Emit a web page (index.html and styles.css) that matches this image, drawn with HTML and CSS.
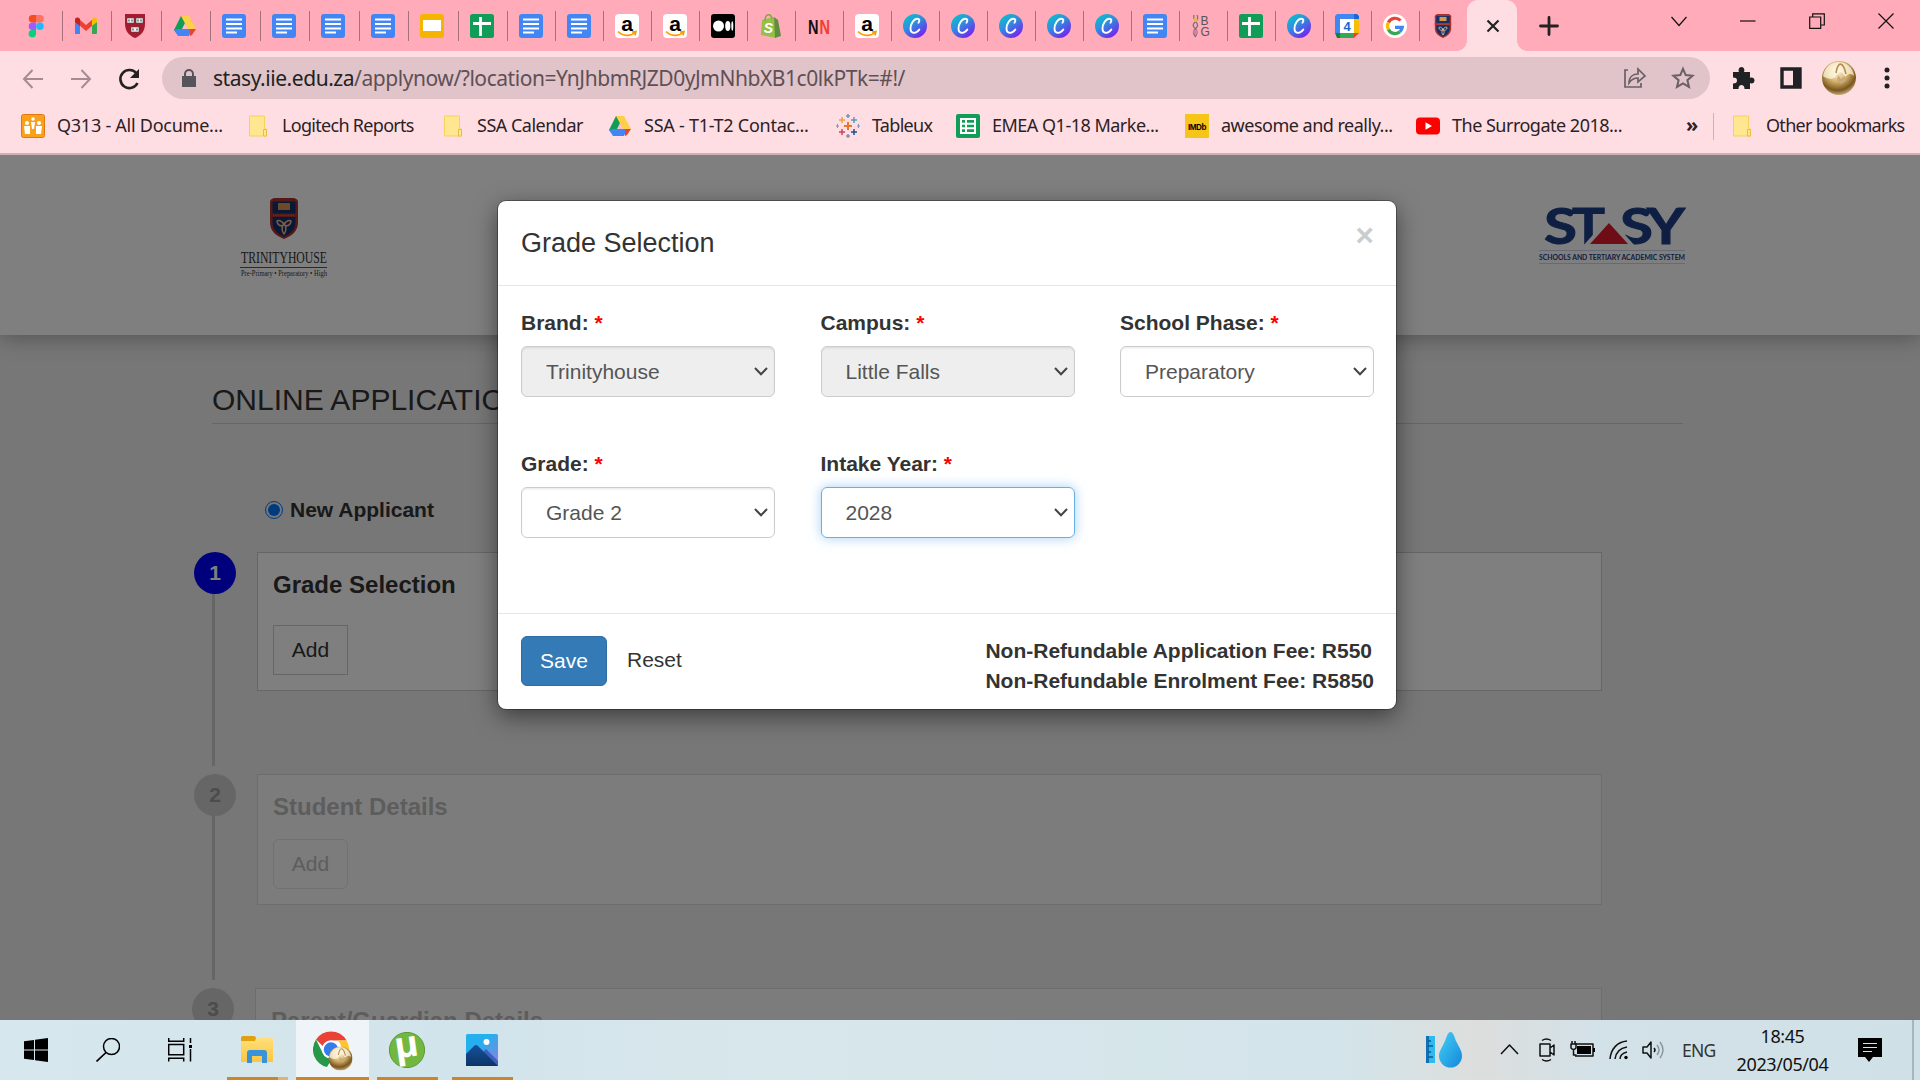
FILE: index.html
```html
<!DOCTYPE html>
<html lang="en">
<head>
<meta charset="utf-8">
<title>Online Application</title>
<link rel="stylesheet" href="styles.css">
</head>
<body>
<svg class="defs" aria-hidden="true">
  <defs>
    <linearGradient id="g-canva" x1="0" y1="0" x2=".7" y2="1"><stop offset="0" stop-color="#00c9c8"/><stop offset=".45" stop-color="#2b95dd"/><stop offset="1" stop-color="#7622ee"/></linearGradient>
    <linearGradient id="g-drop" x1="0" y1="0" x2="1" y2="1"><stop offset="0" stop-color="#45d0f5"/><stop offset="1" stop-color="#1387da"/></linearGradient>
    <linearGradient id="g-photo" x1="0" y1="0" x2="1" y2="1"><stop offset=".4" stop-color="#26afee"/><stop offset="1" stop-color="#9a7bd8"/></linearGradient>
    <linearGradient id="g-folder" x1="0" y1="0" x2="0" y2="1"><stop offset="0" stop-color="#ffdf7a"/><stop offset="1" stop-color="#fbc640"/></linearGradient>
    <linearGradient id="g-mount" x1="0" y1="0" x2="0" y2="1"><stop offset="0" stop-color="#16519c"/><stop offset="1" stop-color="#0c3566"/></linearGradient>
    <radialGradient id="g-gold" cx=".45" cy=".3" r=".75"><stop offset="0" stop-color="#fff6dc"/><stop offset=".4" stop-color="#d8b56d"/><stop offset=".75" stop-color="#7a561f"/><stop offset="1" stop-color="#dcc79b"/></radialGradient>
  </defs>
</svg>
<svg class="symbols" aria-hidden="true">
  <symbol id="figma" viewBox="0 0 24 24"><path fill="#f24e1e" d="M8.500 1H12v7.500H8.500a3.750 3.750 0 010-7.500z"/><path fill="#ff7262" d="M12 1h4a3.750 3.750 0 010 7.500h-4z"/><path fill="#a259ff" d="M8.500 8.500H12V16H8.500a3.750 3.750 0 010-7.500z"/><circle cx="15.900" cy="12.200" r="3.800" fill="#1abcfe"/><path fill="#0acf83" d="M8.500 16H12v4a3.700 3.700 0 11-3.500-4z"/></symbol>
  <symbol id="gmail" viewBox="0 0 24 24"><path fill="#4285f4" d="M1 7v13h5V10z"/><path fill="#34a853" d="M18 10v10h4a1 1 0 001-1V7z"/><path fill="#ea4335" d="M5 5l7 6 7-6v6l-7 6-7-6z"/><path fill="#c5221f" d="M1 8V6c0-3 3-3 5-1v7z"/><path fill="#fbbc04" d="M23 8V6c0-3-3-3-5-1v7z"/></symbol>
  <symbol id="harvard" viewBox="0 0 24 24"><path d="M2 0h20v10c0 8-5 12-10 14C7 22 2 18 2 10z" fill="#a51c30"/><g fill="#eee" stroke="#444" stroke-width=".5"><path d="M4 4h7v5H4zM13 4h7v5h-7zM8 13h8v5H8z"/></g><path d="M5.500 6.500h1M8.500 6.500h1M14.500 6.500h1M17.500 6.500h1M9.500 15.500h1M13.500 15.500h1" stroke="#333" stroke-width="2"/></symbol>
  <symbol id="drive" viewBox="0 0 24 24"><path fill="#0f9d58" d="M8 2h3l3 5-8 14-5-5z"/><path fill="#188038" d="M8 2h4l3 5h-4z"/><path fill="#ffcf48" d="M8 2h8l7 13h-8z"/><path fill="#4285f4" d="M5 15h14l-3 7H5l-4-6z"/><path fill="#ea4335" d="M17 15h6l-4 6-2 1z"/><path fill="#ffbcc8" d="M12 9l3 6H9z"/></symbol>
  <symbol id="docs" viewBox="0 0 24 24"><rect width="24" height="24" rx="3" fill="#4285f4"/><path d="M4 5.500h16M4 10h16M4 14.500h16M4 18.500h11" stroke="#fff" stroke-width="2"/></symbol>
  <symbol id="slides" viewBox="0 0 24 24"><rect width="24" height="24" rx="3" fill="#f4b400"/><path d="M3 6h18v11H3z" fill="#fff"/></symbol>
  <symbol id="sheets" viewBox="0 0 24 24"><rect width="24" height="24" rx="2.500" fill="#0f9d58"/><path d="M3 9.500h18M10.500 3v19" stroke="#fff" stroke-width="2.800"/></symbol>
  <symbol id="sheets2" viewBox="0 0 24 24"><rect width="24" height="24" rx="2" fill="#0f9d58"/><path d="M5 5h14v14H5zM5 9.700h14M5 14.300h14M10 5v14" stroke="#fff" stroke-width="2" fill="none"/></symbol>
  <symbol id="amazon" viewBox="0 0 24 24"><rect width="24" height="24" rx="4" fill="#fff"/><text x="12" y="16.500" text-anchor="middle" class="t-amz">a</text><path d="M3 17.500c5 5 13 5 17 1M17 18l4-.5-1 4" fill="none" stroke="#f90" stroke-width="1.600"/></symbol>
  <symbol id="medium" viewBox="0 0 24 24"><rect width="24" height="24" rx="3"/><g fill="#fff"><circle cx="7.500" cy="12" r="5.500"/><ellipse cx="16.800" cy="12" rx="2.600" ry="5"/><ellipse cx="21.300" cy="12" rx="1" ry="4.700"/></g></symbol>
  <symbol id="shopify" viewBox="0 0 24 24"><path d="M3 6l12-3 2 21-15-3z" fill="#95bf47"/><path d="M15 3l4 3 3 16-6 2z" fill="#5e8e3e"/><path d="M6 7c0-8 6-8 7-2" fill="none" stroke="#7eab38" stroke-width="1.500"/><text x="9.500" y="18.500" text-anchor="middle" class="t-shop">S</text></symbol>
  <symbol id="nn" viewBox="0 0 24 24"><text x="1" y="19.500" textLength="10.500" lengthAdjust="spacingAndGlyphs" class="t-nn">N</text><text x="12.500" y="19.500" textLength="10.500" lengthAdjust="spacingAndGlyphs" class="t-nn red">N</text></symbol>
  <symbol id="canva" viewBox="0 0 24 24"><circle cx="12" cy="12" r="12" fill="url(#g-canva)"/><path d="M15.500 8.800c1.600-2.300.8-4.300-1.200-4.100C10.500 5 7.300 10.500 7.500 14.500c.1 5.500 5.500 5.700 8.800 1" fill="none" stroke="#fff" stroke-width="1.900" stroke-linecap="round"/></symbol>
  <symbol id="bg" viewBox="0 0 24 24"><path d="M6 1c4 6-7 8-3 12 4 4 4 6 1 10M3 1c-2 6 6 8 3 12-4 4-5 6-1 10" fill="none" stroke="#777" stroke-width="1.300"/><circle cx="4.500" cy="6" r="2" fill="#efb44c"/><circle cx="4.500" cy="18" r="2.300" fill="#e07aa5"/><text x="9.500" y="11" class="t-bg">B</text><text x="9.500" y="21.500" class="t-bg">G</text></symbol>
  <symbol id="cal" viewBox="0 0 24 24"><path fill="#4285f4" d="M2 0h17v5H0V2z"/><path fill="#1967d2" d="M19 0h3l2 2v3h-5z"/><path fill="#4285f4" d="M0 5h5v14H0z"/><path fill="#fbbc04" d="M19 5h5v14h-5z"/><path fill="#188038" d="M0 19h5v5H2z"/><path fill="#34a853" d="M5 19h14v5H5z"/><path fill="#ea4335" d="M19 19h5l-5 5z"/><path fill="#fff" d="M5 5h14v14H5z"/><text x="12" y="17" text-anchor="middle" class="t-cal">4</text></symbol>
  <symbol id="google" viewBox="0 0 24 24"><circle cx="12" cy="12" r="12" fill="#fff"/><g fill="none" stroke-width="3.200"><path d="M17.500 6.500A7.500 7.500 0 005.400 8.500" stroke="#ea4335"/><path d="M5.400 8.500a7.500 7.500 0 000 7" stroke="#fbbc05"/><path d="M5.400 15.500a7.500 7.500 0 0011.500 2.300" stroke="#34a853"/><path d="M16.900 17.800a7.500 7.500 0 002.400-4.500H12" stroke="#4285f4"/></g></symbol>
  <symbol id="crest" viewBox="0 0 28 41"><path d="M4 0h20q4 1 4 4v20c0 10-7 14-14 17C7 38 0 34 0 24V4q0-3 4-4z" fill="#a8322c"/><path d="M2.500 3.500h23V24c0 8-5.500 12-11.500 14.500C8 36 2.500 32 2.500 24z" fill="#14306b"/><path d="M0 15.500h28v3.500H0z" fill="#a8322c"/><path d="M8 5h12v7H8z" fill="#d9954e"/><path d="M3.500 17.300h21" stroke="#c08a5a" stroke-width=".7" stroke-dasharray="1 .6"/><path d="M14 27c-2-5-6-5-7-4 0 4 4 6 7 4zm0 0c2-5 6-5 7-4 0 4-4 6-7 4zm0-2c-3 4-2 9 0 11 2-2 3-7 0-11z" fill="none" stroke="#f0bf90" stroke-width="1.500"/></symbol>
  <symbol id="peeps" viewBox="0 0 24 24"><rect x=".5" y=".5" width="23" height="23" rx="2" fill="#f9a11b" stroke="#e2780f"/><g fill="#fff"><circle cx="6" cy="9" r="2"/><circle cx="18" cy="9" r="2"/><circle cx="12" cy="5" r="1.800"/><path d="M3 12h6v8H4zM15 12h6l-1 8h-5zM10 8h4l-1 7h-2z"/></g></symbol>
  <symbol id="folder" viewBox="0 0 20 24"><path d="M1.500 2h15v13h2v7h-17z" fill="#ffe691" stroke="#f5d35c"/><path d="M15.500 22v-6.500h3V22z" fill="#ffe691" stroke="#e9bf39"/></symbol>
  <symbol id="tableau" viewBox="0 0 24 24"><g fill="none" stroke-width="1.500"><path d="M12 8v8M8 12h8" stroke="#e8762d" stroke-width="2"/><path d="M6 3v6M3 6h6" stroke="#e9a24b"/><path d="M18 3v6M15 6h6" stroke="#5c9ab5"/><path d="M6 15v6M3 18h6" stroke="#c4455a"/><path d="M18 15v6M15 18h6" stroke="#1f4f8b"/><path d="M12 0v4M10 2h4M12 20v4M10 22h4" stroke="#7b93b5"/><path d="M1.500 10v4M0 12h3M22.500 10v4M21 12h3" stroke="#8491bd" stroke-width="1"/></g></symbol>
  <symbol id="imdb" viewBox="0 0 24 24"><path d="M0 0h24v24H0z" fill="#f5c518"/><text x="3" y="15.500" textLength="18" lengthAdjust="spacingAndGlyphs" class="t-imdb">IMDb</text></symbol>
  <symbol id="yt" viewBox="0 0 24 24"><rect y="3.500" width="24" height="17" rx="4" fill="red"/><path d="M9.500 8.300l6.500 3.700-6.500 3.700z" fill="#fff"/></symbol>
  <symbol id="gold" viewBox="0 0 34 34"><circle cx="17" cy="17" r="17" fill="url(#g-gold)"/><path d="M1 15C3 5 10 1 17 1s14 5 15 14c-4-4-7-1-9 1-3-7-8-6-9 0-4 3-9 2-13-1z" fill="#fffbe9" opacity=".7"/><path d="M14 12C16 0 21 0 24 13" fill="none" stroke="#b78b50" stroke-width="1.600"/><path d="M16 14l3 4 4-3 1 5-5 3-4-3z" fill="#c9a877"/></symbol>
  <symbol id="chev" viewBox="0 0 14 9"><path d="M1 1l6 6.300L13 1" fill="none" stroke="#444" stroke-width="2"/></symbol>
</svg>

<div class="tabs">
  <div class="tab wide"><svg><use href="#figma"/></svg></div><div class="tab wide"><svg><use href="#gmail"/></svg></div><div class="tab wide"><svg><use href="#harvard"/></svg></div><div class="tab wide"><svg><use href="#drive"/></svg></div><div class="tab wide"><svg><use href="#docs"/></svg></div><div class="tab wide"><svg><use href="#docs"/></svg></div><div class="tab wide"><svg><use href="#docs"/></svg></div><div class="tab wide"><svg><use href="#docs"/></svg></div><div class="tab wide"><svg><use href="#slides"/></svg></div><div class="tab wide"><svg><use href="#sheets"/></svg></div>
  <div class="tab"><svg><use href="#docs"/></svg></div><div class="tab"><svg><use href="#docs"/></svg></div><div class="tab"><svg><use href="#amazon"/></svg></div><div class="tab"><svg><use href="#amazon"/></svg></div><div class="tab"><svg><use href="#medium"/></svg></div><div class="tab"><svg><use href="#shopify"/></svg></div><div class="tab"><svg><use href="#nn"/></svg></div><div class="tab"><svg><use href="#amazon"/></svg></div><div class="tab"><svg><use href="#canva"/></svg></div><div class="tab"><svg><use href="#canva"/></svg></div><div class="tab"><svg><use href="#canva"/></svg></div><div class="tab"><svg><use href="#canva"/></svg></div><div class="tab"><svg><use href="#canva"/></svg></div><div class="tab"><svg><use href="#docs"/></svg></div><div class="tab"><svg><use href="#bg"/></svg></div><div class="tab"><svg><use href="#sheets"/></svg></div><div class="tab"><svg><use href="#canva"/></svg></div><div class="tab"><svg><use href="#cal"/></svg></div><div class="tab"><svg><use href="#google"/></svg></div><div class="tab last"><svg preserveAspectRatio="none"><use href="#crest"/></svg></div>
  <div class="tab-active"><svg width="14" height="14" viewBox="0 0 14 14"><path d="M1.500 1.500l11 11m0-11l-11 11" stroke="#222" stroke-width="2.200"/></svg></div>
  <svg class="plus" width="20" height="20" viewBox="0 0 20 20"><path d="M10 1.500v17M1.500 10h17" stroke="#222" stroke-width="2.800" stroke-linecap="round"/></svg>
  <div class="controls">
    <svg width="16" height="16" viewBox="0 0 16 16"><path d="M.5 4L8 12.500 15.500 4"/></svg>
    <svg width="16" height="16" viewBox="0 0 16 16"><path d="M0 8h15.500"/></svg>
    <svg width="16" height="16" viewBox="0 0 16 16"><path d="M.7 4h11v11.300H.7zM3.700 4V.8h11.600V12h-3.600"/></svg>
    <svg width="16" height="16" viewBox="0 0 16 16"><path d="M.5.5l15 15m0-15l-15 15"/></svg>
  </div>
</div>

<div class="toolbar">
  <svg class="nav dim" viewBox="0 0 24 24"><path d="M22 12H3M11.500 3L3 12l8.500 9"/></svg>
  <svg class="nav dim" viewBox="0 0 24 24"><path d="M2 12h19M12.500 3l8.500 9-8.500 9"/></svg>
  <svg class="nav" viewBox="0 0 24 24"><path d="M20.500 16a9 9 0 11-1-9.500" stroke-width="2.600"/><path d="M22 2v9h-9z" fill="#222" stroke="none"/></svg>
  <div class="omnibox">
    <svg width="14" height="18" viewBox="0 0 14 18"><path d="M0 7h14v11H0z" fill="#55545a"/><path d="M3 8V5a4 4 0 018 0v3" fill="none" stroke="#55545a" stroke-width="2"/></svg>
    <span class="url"><b>stasy.iie.edu.za</b>/applynow/?location=YnJhbmRJZD0yJmNhbXB1c0lkPTk=#!/</span>
    <svg class="share" width="24" height="24" viewBox="0 0 24 24"><path d="M5 4H2v17h16v-4M6 17c0-6 4-9 9-9V3l7 7-7 6v-4c-4 0-7 2-9 5z"/></svg>
    <svg class="star" width="24" height="24" viewBox="0 0 24 24"><path d="M12 2.800l2.700 6.300 6.900.6-5.200 4.500 1.600 6.700-6-3.600-6 3.600 1.600-6.700-5.200-4.500 6.900-.6z"/></svg>
  </div>
  <svg class="tool" viewBox="0 0 24 24"><path d="M2 6h6c-1-2 0-5 2.500-5S14 4 13 6h6v6c2-1 4.500 0 4.500 2.500S21 18 19 17v6h-5.500c0-3-1.300-4-3-4s-3 1-3 4H2v-5.500c3 0 4-1.300 4-3s-1-3-4-3z" fill="#202124"/></svg>
  <svg class="tool" viewBox="0 0 24 24"><path d="M3 3h18v18H3z" fill="none" stroke="#202124" stroke-width="3.400"/><path d="M14 3h8v18h-8z" fill="#202124"/></svg>
  <svg class="avatar"><use href="#gold"/></svg>
  <svg class="tool dots" viewBox="0 0 24 24"><g fill="#202124"><circle cx="12" cy="4" r="2.500"/><circle cx="12" cy="12" r="2.500"/><circle cx="12" cy="20" r="2.500"/></g></svg>
</div>

<div class="bookmarks">
  <div class="bm loose" style="width:227px"><svg><use href="#peeps"/></svg><span>Q313 - All Docume...</span></div>
  <div class="bm f tight" style="width:195px"><svg><use href="#folder"/></svg><span>Logitech Reports</span></div>
  <div class="bm f" style="width:165px"><svg><use href="#folder"/></svg><span>SSA Calendar</span></div>
  <div class="bm loose" style="width:228px"><svg><use href="#drive"/></svg><span>SSA - T1-T2 Contac...</span></div>
  <div class="bm tight" style="width:120px"><svg><use href="#tableau"/></svg><span>Tableux</span></div>
  <div class="bm" style="width:229px"><svg><use href="#sheets2"/></svg><span>EMEA Q1-18 Marke...</span></div>
  <div class="bm" style="width:231px"><svg><use href="#imdb"/></svg><span>awesome and really...</span></div>
  <div class="bm" style="width:270px"><svg><use href="#yt"/></svg><span>The Surrogate 2018...</span></div>
  <div class="more">»</div>
  <div class="bm f tight other"><svg><use href="#folder"/></svg><span>Other bookmarks</span></div>
</div>

<main class="page">
  <header class="site-head">
    <svg class="th-logo" width="90" height="84" viewBox="0 0 90 84"><use href="#crest" x="31" y="0" width="28" height="41"/><text x="2" y="64.500" textLength="86" lengthAdjust="spacingAndGlyphs" class="t-th">TRINITYHOUSE</text><path d="M1 69.500h87" stroke="#555"/><text x="2" y="78" textLength="86" lengthAdjust="spacingAndGlyphs" class="t-ths">Pre-Primary • Preparatory • High</text></svg>
    <svg class="st-logo" width="148" height="62" viewBox="0 0 148 62"><g class="t-st"><text x="6" y="39" textLength="33" lengthAdjust="spacingAndGlyphs">S</text><text x="34" y="39" textLength="33" lengthAdjust="spacingAndGlyphs">T</text><text x="82" y="39" textLength="33" lengthAdjust="spacingAndGlyphs">S</text><text x="109" y="39" textLength="38" lengthAdjust="spacingAndGlyphs">Y</text></g><path d="M71 12l27 30H44z" fill="#fff"/><path d="M71 18l19 21H52z" fill="#dc1a2c"/><path d="M1 45.500h146M1 58.500h146" stroke="#d0d4e6"/><text x="1" y="55" textLength="146" lengthAdjust="spacingAndGlyphs" class="t-sts">SCHOOLS AND TERTIARY ACADEMIC SYSTEM</text></svg>
  </header>
  <section class="content">
    <h1>ONLINE APPLICATION</h1>
    <div class="applicant"><i class="radio"></i>New Applicant</div>
    <div class="step s1">
      <div class="rail"><div class="num on">1</div><div class="line"></div></div>
      <div class="card"><h2>Grade Selection</h2><div class="add">Add</div></div>
    </div>
    <div class="step s2">
      <div class="rail"><div class="num">2</div><div class="line"></div></div>
      <div class="card off"><h2>Student Details</h2><div class="add">Add</div></div>
    </div>
    <div class="step s3">
      <div class="rail"><div class="num">3</div></div>
      <div class="card off"><h2>Parent/Guardian Details</h2></div>
    </div>
  </section>
  <div class="backdrop">
    <div class="modal">
      <div class="m-head"><span>Grade Selection</span><span class="close">×</span></div>
      <div class="m-body">
        <div class="field"><label>Brand: <em>*</em></label><div class="select disabled">Trinityhouse<svg><use href="#chev"/></svg></div></div>
        <div class="field"><label>Campus: <em>*</em></label><div class="select disabled">Little Falls<svg><use href="#chev"/></svg></div></div>
        <div class="field"><label>School Phase: <em>*</em></label><div class="select">Preparatory<svg><use href="#chev"/></svg></div></div>
        <div class="field"><label>Grade: <em>*</em></label><div class="select">Grade 2<svg><use href="#chev"/></svg></div></div>
        <div class="field"><label>Intake Year: <em>*</em></label><div class="select focus">2028<svg><use href="#chev"/></svg></div></div>
      </div>
      <div class="m-foot"><div class="save">Save</div><div class="reset">Reset</div><div class="fees">Non-Refundable Application Fee: R550<br>Non-Refundable Enrolment Fee: R5850</div></div>
    </div>
  </div>
</main>

<div class="taskbar">
  <div class="tb"><svg width="24" height="24" viewBox="0 0 24 24"><path d="M0 3.300L10 2v9.500H0zM11 1.800L24 0v11.500H11zM0 12.500h10V22L0 20.700zM11 12.500h13V24l-13-1.800z"/></svg></div>
  <div class="tb"><svg width="24" height="24" viewBox="0 0 24 24"><circle cx="15.500" cy="8.500" r="8" fill="none" stroke="#000" stroke-width="1.500"/><path d="M10 14.500L.5 23.500" stroke="#000" stroke-width="1.700"/></svg></div>
  <div class="tb"><svg width="24" height="24" viewBox="0 0 24 24"><path d="M.7 6.500h15v10.300h-15zM.7 0v3.300h15V0M.7 23.500v-3.300h15v3.300M22.500 0v5M22.500 11v12.500" fill="none" stroke="#000" stroke-width="1.500"/><path d="M21 7h3v3h-3z"/></svg></div>
  <div class="tb app explorer"><svg width="34" height="28" viewBox="0 0 34 28"><path d="M1 6V2q0-2 2-2h11q2 0 2 2.500L15 5z" fill="#e0a010"/><path d="M1 5h14l2-3h15q1 0 1 2v22H1z" fill="url(#g-folder)"/><path d="M7 27V17q0-3 3-3h14q3 0 3 3v10h-5v-7H12v7z" fill="#3892dc"/></svg></div>
  <div class="tb app active"><svg width="40" height="40" viewBox="0 0 40 40"><circle cx="18" cy="18.500" r="18" fill="#fff"/><path d="M18 .5a18 18 0 0115.600 9H18a9 9 0 00-8.300 5.500L3 8.500A18 18 0 0118 .5z" fill="#ea4335"/><path d="M3 8.500l7.200 14.500c2 3.500 5 4.500 8.800 4.500l-5 8.600A18 18 0 013 8.500z" fill="#279847"/><path d="M33.600 9.500A18 18 0 0118 36.500l8-13.500a9 9 0 00-1.700-13.500z" fill="#fbc52e"/><circle cx="18" cy="18.500" r="9" fill="#fff"/><circle cx="18" cy="18.500" r="7.200" fill="#367bea"/><use href="#gold" x="15.500" y="15.500" width="24" height="24"/></svg></div>
  <div class="tb app torrent"><svg width="36" height="36" viewBox="0 0 36 36"><circle cx="18" cy="18" r="17.600" fill="#72b840" stroke="#5a9a30"/><text x="18" y="25" text-anchor="middle" transform="rotate(-8 18 18)" class="t-mu">µ</text></svg></div>
  <div class="tb app photos"><svg width="32" height="32" viewBox="0 0 32 32"><rect width="32" height="32" rx="1.500" fill="url(#g-photo)"/><path d="M14 21l6-6 12 12v5H14z" fill="#3d5fbd"/><path d="M0 20l8-8q2-2 4 0l20 20H0z" fill="url(#g-mount)"/><circle cx="20.500" cy="8" r="3" fill="#fff"/></svg></div>
  <div class="tray">
    <svg class="weather" width="38" height="38" viewBox="0 0 38 38"><path d="M1 5h9v27H1z" fill="#30b9ee"/><path d="M1 5h3v27H1z" fill="#1270b5"/><path d="M3 10h3M3 15h5M3 21h3M3 26h5" stroke="#0c5a97" stroke-width="1.600"/><path d="M25.500 1c3 0 4 6 6 10 3 6 5.500 9 5.500 14a11.500 11.500 0 01-23 0c0-5 3-8 5.500-14 2-4 3-10 6-10z" fill="url(#g-drop)"/></svg>
    <svg class="up" width="19" height="12" viewBox="0 0 19 12"><path d="M1 11l8.500-9L18 11"/></svg>
    <svg class="meet" width="18" height="24" viewBox="0 0 18 24"><path d="M2 6h10v12H2zM12 10l4-3v10l-4-3M4 2.500c3-2 6-2 9 0M4 21.500c3 2 6 2 9 0"/></svg>
    <svg class="bat" width="26" height="20" viewBox="0 0 26 20"><path d="M6 4h18v12H6"/><path d="M8 6h14v8H8zM24 8h2v4h-2z" fill="#000" stroke="none"/><path d="M2 4h5v4q-2.500 3-5 0zM3 1v3M6 1v3M4.500 9v6h3" fill="#d3e2e9"/></svg>
    <svg class="wifi" width="20" height="20" viewBox="0 0 20 20"><path d="M1 19C2 9 8 2 18 1M6 19c1-7 5-11 12-12M11 19c0-4 3-6 7-7"/><circle cx="17" cy="17.500" r="1.700" fill="#000" stroke="none"/></svg>
    <svg class="vol" width="24" height="20" viewBox="0 0 24 20"><path d="M1 7h4l4-5v16l-4-5H1zM12 8q2 2 0 4"/><path d="M15 5q4 5 0 10M18 2q6 8 0 16" stroke="#8b979f"/></svg>
    <span class="eng">ENG</span>
    <div class="clock"><span>18:45</span><span>2023/05/04</span></div>
    <svg class="note" width="24" height="24" viewBox="0 0 24 24"><path d="M0 0h24v19h-9l-4 5-4-5H0z"/><path d="M5 5.500h14M5 9.500h14M5 13.500h9" stroke="#d3e4ea" stroke-width="1.200"/></svg>
    <i class="edge"></i>
  </div>
</div>
</body>
</html>
```
FILE: styles.css
```css
* { box-sizing: border-box; }
body {
  margin: 0; width: 1920px; height: 1080px; overflow: hidden;
  display: flex; flex-direction: column;
  font-family: "Liberation Sans", Arial, sans-serif; font-size: 21px; color: #333;
}
svg { flex: none; display: block; }
.defs { position: absolute; width: 0; height: 0; }
.symbols { display: none; }

/* text inside icons and logos */
.t-amz { font: bold 21px "Liberation Sans", sans-serif; }
.t-shop { font: italic bold 14px "Liberation Sans", sans-serif; fill: #fff; }
.t-nn { font: bold 20px "Liberation Sans", sans-serif; fill: #181010; }
.t-nn.red { fill: #f0402c; }
.t-bg { font: 12px "Liberation Sans", sans-serif; fill: #555; }
.t-cal { font: bold 13px "Liberation Sans", sans-serif; fill: #1a66d0; }
.t-imdb { font: bold 9px "Liberation Sans", sans-serif; }
.t-mu { font: bold 36px "Noto Sans", sans-serif; fill: #fff; }
.t-th { font: 16.500px "Liberation Serif", serif; fill: #333; }
.t-ths { font: 7.500px "Liberation Serif", serif; fill: #333; }
.t-st text { font: bold 49px Lato, sans-serif; fill: #1c3f86; stroke: #1c3f86; stroke-width: 1px; }
.t-sts { font: 700 6.500px Lato, sans-serif; fill: #243a84; }

/* tab strip */
.tabs { height: 51px; flex: none; background: #ffabba; display: flex; align-items: center; padding-left: 13px; }
.tab { width: 48px; height: 51px; flex: none; display: flex; align-items: center; justify-content: space-between; padding: 1px 0 0 11px; }
.tab.wide { width: 49.5px; }
.tab svg { width: 24px; height: 24px; }
.tab::after { content: ""; width: 1px; height: 30px; background: #a3727d; }
.tab.last { width: 47px; }
.tab.last::after { background: none; }
.tab-active { position: relative; width: 50px; height: 51px; flex: none; border-radius: 11px 11px 0 0; background: #ffdee3; display: flex; align-items: center; justify-content: center; padding-left: 2px; }
.tab-active::before, .tab-active::after { content: ""; position: absolute; bottom: 0; width: 10px; height: 10px; }
.tab-active::before { left: -10px; background: radial-gradient(circle at 0 0, transparent 9.500px, #ffdee3 10px); }
.tab-active::after { right: -10px; background: radial-gradient(circle at 100% 0, transparent 9.500px, #ffdee3 10px); }
.plus { margin-left: 22px; }
.controls { margin: 0 26px 9px auto; display: flex; gap: 53px; }
.controls path { fill: none; stroke: #111; stroke-width: 1.200; }

/* toolbar */
.toolbar { height: 51px; flex: none; background: #ffdee3; display: flex; align-items: center; padding: 4px 0 0 21px; }
.nav { width: 24px; height: 24px; margin-right: 24px; fill: none; stroke: #222; stroke-width: 2; }
.nav.dim { stroke: #a58c93; }
.nav:nth-child(3) { margin-right: 21px; }
.omnibox { width: 1548px; height: 42px; margin-bottom: 1px; border-radius: 21px; background: #e0c4c9; display: flex; align-items: center; padding: 0 15px 0 20px; }
.url { margin: 0 auto 0 17px; white-space: nowrap; font: 21px "Noto Sans", sans-serif; letter-spacing: -.450px; color: #5f5055; }
.url b { font-weight: 400; color: #222; }
.share, .star { fill: none; stroke: #6a6065; stroke-width: 1.700; }
.star { margin-left: 24px; stroke-width: 2; }
.tool { width: 24px; height: 24px; margin-left: 21px; margin-bottom: 1px; }
.tool + .tool { margin-left: 24px; }
.avatar { width: 34px; height: 34px; margin-left: 19px; margin-bottom: 1px; }
.avatar + .tool { margin-left: 19px; }

/* bookmarks */
.bookmarks { height: 53px; flex: none; background: #ffdee3; border-bottom: 2px solid #ccb1b6; display: flex; align-items: center; padding: 0 0 2px 21px; font: 18px "Noto Sans", sans-serif; letter-spacing: -.5px; color: #2b2226; }
.bm { display: flex; align-items: center; gap: 12px; white-space: nowrap; flex: none; }
.bm span { padding-bottom: 3px; }
.bm svg { width: 24px; height: 24px; margin-bottom: 1px; }
.bm.f { gap: 14px; }
.bm.f svg { width: 20px; }
.loose { letter-spacing: -.250px; }
.tight { letter-spacing: -.700px; }
.more { width: 27px; margin-bottom: 5px; font-weight: 700; font-size: 20px; }
.other { border-left: 1px solid #ceb0b7; padding-left: 18px; }

/* page behind the dialog */
.page { position: relative; height: 865px; flex: none; overflow: hidden; background: #eee; }
.site-head { position: relative; height: 180px; background: #fff; box-shadow: 0 4px 20px rgba(0,0,0,.28); display: flex; justify-content: space-between; padding: 43px 234px 0 239px; }
.st-logo { margin-top: 7px; }
.content { padding: 0 237px 0 194px; }
h1 { margin: 47px 0 0 18px; height: 42px; border-bottom: 1px solid #ccc; font-weight: 400; font-size: 30px; line-height: 36px; }
.applicant { display: flex; align-items: center; gap: 7px; height: 30px; margin: 71px 0 27px 71px; font-weight: 700; }
.radio { width: 18px; height: 18px; border: 1.500px solid #0075ff; border-radius: 50%; padding: 2px; background: #0075ff content-box; }
.step { display: flex; gap: 21px; width: 1408px; }
.s1 { height: 222px; }
.s2 { height: 214px; }
.s3 { margin-left: -2px; width: 1410px; }
.rail { width: 42px; display: flex; flex-direction: column; padding-bottom: 8px; }
.num { width: 42px; height: 42px; flex: none; border-radius: 50%; background: #ccc; color: #999; font-weight: 700; line-height: 41px; text-align: center; }
.num.on { background: #0000fa; color: #fff; }
.line { width: 3px; flex: 1; margin-left: 18px; background: #ccc; }
.card { flex: 1; height: 139px; background: #fff; border: 1px solid #ccc; padding: 15px; }
.card.off { height: 131px; background: #f8f8f8; border-color: #dadada; color: #bbb; }
h2 { margin: 0; font-size: 24px; line-height: 34px; }
.add { width: 75px; height: 50px; margin-top: 23px; border: 1px solid #ccc; line-height: 48px; text-align: center; }
.off .add { margin-top: 15px; border-radius: 6px; border-color: #e2e2e2; }

/* dialog */
.backdrop { position: absolute; inset: 0; background: rgba(0,0,0,.5); padding: 46px 0 0 498px; }
.modal { width: 898px; height: 508px; background: #fff; border-radius: 8px; box-shadow: 0 0 0 1px rgba(0,0,0,.3), 0 7px 23px rgba(0,0,0,.5); display: flex; flex-direction: column; }
.m-head { height: 85px; border-bottom: 1px solid #e5e5e5; display: flex; justify-content: space-between; padding: 23px 22px 0 23px; font-size: 27px; line-height: 38px; }
.close { font-size: 31.500px; font-weight: 700; line-height: 22px; color: #ccc; }
.m-body { height: 327px; padding: 22px 21px 0 23px; display: grid; grid-template-columns: repeat(3, 254px); grid-auto-rows: 141px; column-gap: 45.500px; align-content: start; }
label { display: block; height: 38px; line-height: 30px; font-weight: 700; }
em { font-style: normal; color: red; }
.select { height: 51px; border: 1px solid #ccc; border-radius: 6px; box-shadow: inset 0 1.500px 1.500px rgba(0,0,0,.075); padding: 0 6px 0 24px; display: flex; align-items: center; justify-content: space-between; color: #555; }
.select svg { width: 14px; height: 9px; }
.disabled { background: #eee; }
.focus { border-color: #66afe9; box-shadow: 0 0 12px rgba(102,175,233,.6); }
.m-foot { flex: 1; border-top: 1px solid #e5e5e5; display: flex; padding: 22px 22px 0 23px; }
.save { width: 86px; height: 50px; border: 1px solid #2e6da4; border-radius: 6px; background: #337ab7; color: #fff; line-height: 48px; text-align: center; }
.reset { margin-left: 20px; line-height: 48px; }
.fees { margin-left: auto; font-weight: 700; line-height: 30px; }

/* taskbar */
.taskbar { height: 60px; flex: none; display: flex; background: linear-gradient(90deg, #d7e7ee 0, #d2e4eb 25%, #d8e7ec 40%, #d3e4ea 70%, #dcdedc 77%, #d3e1e8 83%, #cfe1e7 100%); }
.tb { width: 72px; height: 60px; display: flex; align-items: center; justify-content: center; flex: none; }
.app { border-bottom: 3px solid #cc8528; padding-top: 2px; }
.explorer { width: 61px; margin-left: 11px; padding-right: 1px; border-style: solid; border-width: 0 0 3px; border-image: linear-gradient(90deg, #cc8528 81%, #dfb27c 81%) 3; }
.active { width: 73px; margin-left: 8px; background: #eff4f8; padding-left: 1px; padding-top: 4px; }
.torrent { width: 61px; margin-left: 8px; padding-right: 1px; }
.photos { width: 61px; margin-left: 14px; padding-right: 1px; }
.tray { margin-left: auto; display: flex; align-items: center; }
.tray svg path { stroke-linejoin: round; }
.up, .meet, .bat, .wifi, .vol { fill: none; stroke: #111; stroke-width: 1.500; }
.weather { margin-right: 37px; }
.up { margin-right: 19px; margin-bottom: 3px; }
.meet { margin-right: 13px; }
.bat { margin-right: 14px; }
.wifi { margin-right: 13px; }
.vol { margin-right: 16px; }
.eng { width: 33px; margin-right: 20px; font: 17.500px "Noto Sans", sans-serif; letter-spacing: -.800px; }
.clock { width: 95px; margin-right: 28px; font: 18px/28px "Noto Sans", sans-serif; letter-spacing: -.400px; display: flex; flex-direction: column; align-items: center; white-space: nowrap; color: #111; }
.note { margin-right: 30px; }
.edge { width: 2px; height: 60px; margin-right: 6px; background: #a7b5bf; }
```
